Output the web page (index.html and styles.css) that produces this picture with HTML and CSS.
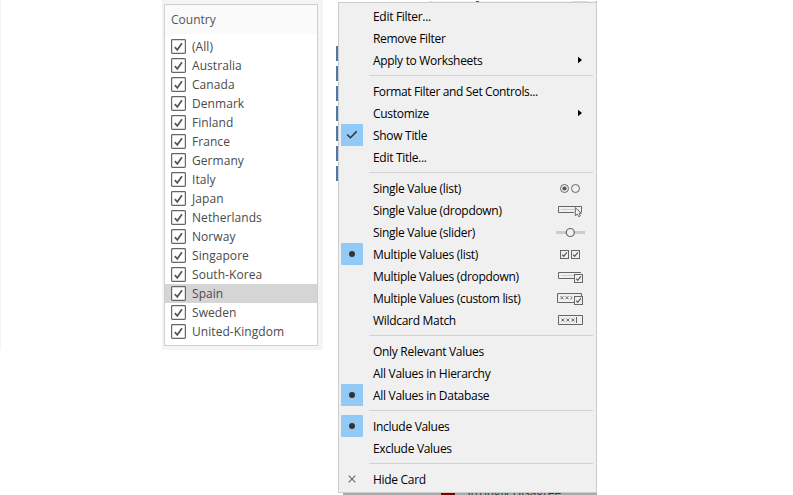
FILE: index.html
```html
<!DOCTYPE html>
<html lang="en">
<head>
<meta charset="utf-8">
<title>Filter menu</title>
<link rel="stylesheet" href="styles.css">
</head>
<body>
<svg class="defs" aria-hidden="true">
  <symbol id="box" viewBox="0 0 15 15"><rect x=".6" y=".6" width="13.8" height="13.8" rx=".8" fill="#fff" stroke="#666" stroke-width="1.2"/><path d="M3.8 8.1 6.3 10.8 11 4.2" fill="none" stroke="#555" stroke-width="1.7"/></symbol>
  <symbol id="mini" viewBox="0 0 9 9"><rect x=".5" y=".5" width="8" height="8" fill="#f0f0f0" stroke="#666"/><path d="M2.2 4.7 3.7 6.4 6.9 2.3" fill="none" stroke="#555" stroke-width="1.1"/></symbol>
</svg>
<main class="screen">
  <div class="edge"></div>
  <aside class="panel">
    <section class="card">
      <h1 class="title">Country</h1>
      <ul class="list">
        <li class="row"><svg class="check"><use href="#box"/></svg>(All)</li>
        <li class="row"><svg class="check"><use href="#box"/></svg>Australia</li>
        <li class="row"><svg class="check"><use href="#box"/></svg>Canada</li>
        <li class="row"><svg class="check"><use href="#box"/></svg>Denmark</li>
        <li class="row"><svg class="check"><use href="#box"/></svg>Finland</li>
        <li class="row"><svg class="check"><use href="#box"/></svg>France</li>
        <li class="row"><svg class="check"><use href="#box"/></svg>Germany</li>
        <li class="row"><svg class="check"><use href="#box"/></svg>Italy</li>
        <li class="row"><svg class="check"><use href="#box"/></svg>Japan</li>
        <li class="row"><svg class="check"><use href="#box"/></svg>Netherlands</li>
        <li class="row"><svg class="check"><use href="#box"/></svg>Norway</li>
        <li class="row"><svg class="check"><use href="#box"/></svg>Singapore</li>
        <li class="row"><svg class="check"><use href="#box"/></svg>South-Korea</li>
        <li class="row hover"><svg class="check"><use href="#box"/></svg>Spain</li>
        <li class="row"><svg class="check"><use href="#box"/></svg>Sweden</li>
        <li class="row"><svg class="check"><use href="#box"/></svg>United-Kingdom</li>
      </ul>
    </section>
  </aside>
  <section class="chart">
    <div class="bars"><i></i><i></i><i></i><i></i><i></i><i></i><i></i></div>
    <div class="top-edge"><i class="speck"></i><i class="thumb"></i></div>
    <div class="legend"><i class="swatch"></i><span class="legend-text">Strongly Disagree</span></div>
    <nav class="menu">
      <div class="group">
        <div class="item"><span class="mark"></span><span class="label">Edit Filter...</span></div>
        <div class="item"><span class="mark"></span><span class="label">Remove Filter</span></div>
        <div class="item"><span class="mark"></span><span class="label">Apply to Worksheets</span><svg class="arrow" viewBox="0 0 5 8"><path d="M0 0 5 4 0 8z"/></svg></div>
      </div>
      <div class="group">
        <div class="item"><span class="mark"></span><span class="label tight">Format Filter and Set Controls...</span></div>
        <div class="item"><span class="mark"></span><span class="label">Customize</span><svg class="arrow" viewBox="0 0 5 8"><path d="M0 0 5 4 0 8z"/></svg></div>
        <div class="item"><span class="mark on"><svg class="tick" viewBox="0 0 12 10"><path d="M1.2 4.5 4.4 7.7 10.7 1.4" fill="none" stroke="#333" stroke-width="1.5"/></svg></span><span class="label">Show Title</span></div>
        <div class="item"><span class="mark"></span><span class="label">Edit Title...</span></div>
      </div>
      <div class="group">
        <div class="item"><span class="mark"></span><span class="label">Single Value (list)</span>
          <svg class="icon" viewBox="0 0 30 14"><g fill="none" stroke="#666"><circle cx="8.5" cy="7.5" r="4"/><circle cx="19.5" cy="7.5" r="4"/></g><circle cx="8.5" cy="7.5" r="2.1" fill="#555"/></svg></div>
        <div class="item"><span class="mark"></span><span class="label">Single Value (dropdown)</span>
          <svg class="icon" viewBox="0 0 30 14"><path d="M18 9.5H2.5v-6h23v6" fill="none" stroke="#666"/><path d="M5 6.5h13" stroke="#ccc"/><path d="M19.3 4.6v8.2l2-1.7 1.4 2.6 1.7-.9-1.3-2.5h2.3z" fill="#f0f0f0" stroke="#666"/></svg></div>
        <div class="item"><span class="mark"></span><span class="label">Single Value (slider)</span>
          <svg class="icon" viewBox="0 0 30 14"><path d="M0 7.5h29" stroke="#ccc" stroke-width="3"/><circle cx="14.3" cy="7.5" r="4" fill="#f0f0f0" stroke="#666" stroke-width="1.2"/></svg></div>
        <div class="item"><span class="mark on"><i class="dot"></i></span><span class="label">Multiple Values (list)</span>
          <svg class="icon" viewBox="0 0 30 14"><use href="#mini" x="4" y="3" width="9" height="9"/><use href="#mini" x="15" y="3" width="9" height="9"/></svg></div>
        <div class="item"><span class="mark"></span><span class="label">Multiple Values (dropdown)</span>
          <svg class="icon" viewBox="0 0 30 14"><path d="M18 9.5H2.5v-6H25" fill="none" stroke="#666"/><path d="M5 6.5h13" stroke="#ccc"/><use href="#mini" x="18" y="5" width="9" height="9"/></svg></div>
        <div class="item"><span class="mark"></span><span class="label">Multiple Values (custom list)</span>
          <svg class="icon" viewBox="0 0 30 14"><path d="M18 11.5H1.5v-9h24V5" fill="none" stroke="#666"/><path d="m4.5 5.2 3 3m0-3-3 3m5-3 3 3m0-3-3 3m5-3 1.6 1.5-1.6 1.5" fill="none" stroke="#666"/><use href="#mini" x="18" y="5" width="9" height="9"/></svg></div>
        <div class="item"><span class="mark"></span><span class="label">Wildcard Match</span>
          <svg class="icon" viewBox="0 0 30 14"><path d="M2.5 2.5h24v9h-24z" fill="none" stroke="#666"/><path d="m5.4 5.5 3 3m0-3-3 3m5-3 3 3m0-3-3 3m5-3 3 3m0-3-3 3M20.5 4v6" fill="none" stroke="#666"/></svg></div>
      </div>
      <div class="group">
        <div class="item"><span class="mark"></span><span class="label">Only Relevant Values</span></div>
        <div class="item"><span class="mark"></span><span class="label">All Values in Hierarchy</span></div>
        <div class="item"><span class="mark on"><i class="dot"></i></span><span class="label">All Values in Database</span></div>
      </div>
      <div class="group">
        <div class="item"><span class="mark on"><i class="dot"></i></span><span class="label">Include Values</span></div>
        <div class="item"><span class="mark"></span><span class="label">Exclude Values</span></div>
      </div>
      <div class="group">
        <div class="item"><span class="mark"><svg class="cross" viewBox="0 0 8 8"><path d="m.7.7 6.6 6.6m0-6.6L.7 7.3" stroke="#666" stroke-width="1.1"/></svg></span><span class="label">Hide Card</span></div>
      </div>
    </nav>
  </section>
</main>
</body>
</html>
```
FILE: styles.css
```css
* { box-sizing: border-box; }
body { margin: 0; background: #fff; overflow: hidden; font-family: "Open Sans", "Noto Sans", sans-serif; }
.defs { position: absolute; width: 0; height: 0; }
.screen { display: flex; align-items: flex-start; width: 793px; height: 495px; overflow: hidden; }
.edge { width: 1px; height: 350px; background: #f4f4f4; }
.panel { width: 161px; height: 350px; margin-left: 161px; padding: 4px 5px 4px 2px; background: #f4f4f4; }
.card { width: 154px; height: 342px; border: 1px solid #cfcfcf; background: #fff; }
.title { margin: 0; height: 29px; padding-left: 6px; background: #fafafa; font-size: 12px; line-height: 30px; font-weight: 400; letter-spacing: .02px; color: #555; }
.list { list-style: none; margin: 0; padding: 3px 0 0; }
.row { display: flex; align-items: center; gap: 6px; height: 19px; padding-left: 6px; font-size: 12px; letter-spacing: .06px; color: #4a4a4a; white-space: nowrap; }
.row.hover { background: #d5d5d5; }
.check { width: 15px; height: 15px; flex: none; }
.chart { position: relative; width: 262px; height: 495px; margin-left: 13px; }
.bars { display: flex; flex-direction: column; gap: 5px; padding-top: 46px; }
.bars i { width: 2px; height: 15px; background: #4e79a7; }
.top-edge { position: absolute; top: 1px; left: 94px; width: 167px; height: 1px; display: flex; justify-content: space-between; padding: 0 8px 0 52px; background: #f4f4f4; border-left: 1px solid #bbb; border-right: 1px solid #aaa; }
.speck { width: 3px; height: 1px; margin-right: auto; margin-left: -7px; background: #555; }
.thumb { width: 16px; height: 1px; background: #ddd; }
.legend { position: absolute; left: 7px; top: 492px; width: 254px; height: 3px; overflow: hidden; display: flex; align-items: flex-start; background: #aaa; }
.swatch { width: 14px; height: 3px; margin-left: 98px; background: #800000; }
.legend-text { margin-left: 9px; margin-top: -7px; font-size: 12px; line-height: 16px; letter-spacing: -.05px; color: #333; white-space: nowrap; }
.menu { position: absolute; left: 2px; top: 2px; width: 259px; height: 491px; padding: 2px; border: 1px solid #ccc; background: #f0f0f0; }
.group + .group::before { content: ""; display: block; height: 1px; margin: 4px 0 4px 28px; width: 224px; background: #d2d2d2; }
.item { display: flex; align-items: center; height: 22px; font-size: 12px; color: #000; }
.mark { display: flex; align-items: center; justify-content: center; width: 22px; height: 22px; flex: none; }
.mark.on { background: #91c9f7; }
.label { flex: 1; padding: 2px 0 0 10px; letter-spacing: -.3px; line-height: 22px; white-space: nowrap; }
.label.tight { letter-spacing: -.36px; }
.dot { width: 6px; height: 6px; border-radius: 50%; background: #333; }
.tick { width: 12px; height: 10px; }
.cross { width: 8px; height: 8px; }
.arrow { width: 4px; height: 8px; margin-right: 12px; }
.icon { width: 30px; height: 14px; margin-right: 8px; }
```
